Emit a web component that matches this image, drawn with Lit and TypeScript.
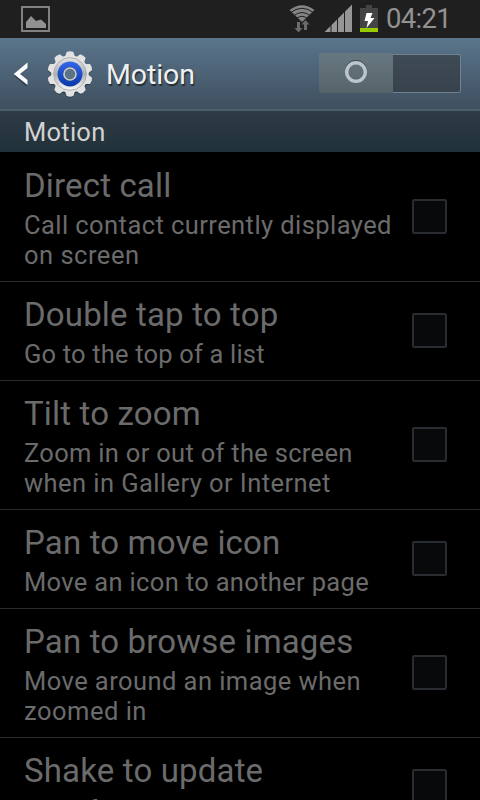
import { LitElement, html, css, svg } from "lit";
import { customElement } from "lit/decorators.js";

@customElement("status-bar")
class StatusBar extends LitElement {
  static styles = css`
    :host { display: flex; height: 38px; background: #1f1f1f; padding: 0 29px 0 21px; align-items: flex-start; }
    svg { display: block; flex: none; }
    .picture { margin-top: 5px; }
    .spacer { flex: 1; }
    .wifi { margin-top: 4px; }
    .signal { margin: 4px 0 0 8px; }
    .battery { margin: 5px 0 0 7px; }
    .clock { width: 65px; margin-left: 8px; font: 27.5px/38px Roboto, sans-serif; color: #929292; white-space: nowrap; letter-spacing: -0.7px; }
  `;
  render() {
    return html`
      <svg class="picture" width="29" height="28" viewBox="0 0 29 28">
        <rect x="1" y="2" width="27" height="24" fill="none" stroke="#8c8c8c" stroke-width="1.8"/>
        <path d="M5 23V17L10 11L15 16L20 14.5L25 19V23Z" fill="#919191"/>
      </svg>
      <div class="spacer"></div>
      <svg class="wifi" width="27" height="29" viewBox="0 0 27 29">
        <path d="M0.500 6Q13 -3.500 25.500 6L13 18Z" fill="#858585"/>
        <g fill="none" stroke="#1f1f1f" stroke-width="1">
          <path d="M1 9Q13 -0.500 25 9"/>
          <path d="M4 12.200Q13 4.800 22 12.200"/>
          <path d="M7 15Q13 9.600 19 15"/>
        </g>
        <path d="M8 18h3v6h2.500L9.500 28.500L5.500 24H8Z" fill="#6b6b6b"/>
        <path d="M15 26h3v-5.500h2.500L16.500 16L12.500 20.500H15Z" fill="#6b6b6b"/>
      </svg>
      <svg class="signal" width="29" height="28" viewBox="0 0 29 28">
        <path d="M0.500 28L6.500 22V28ZM7.500 28V21L13 15.500V28ZM14 28V14.500L20 8.500V28ZM21 28V7.500L28 0.500V28Z" fill="#969696"/>
      </svg>
      <svg class="battery" width="18" height="27" viewBox="0 0 18 27">
        <path d="M6 0h6v3h6v20H0V3h6Z" fill="#444"/>
        <rect y="23" width="18" height="4" fill="#99cc00"/>
        <path d="M6.500 8h6l-2 5h4L6.500 23l1.500-7H4.500Z" fill="#fff"/>
      </svg>
      <div class="clock">04:21</div>`;
  }
}

@customElement("motion-switch")
class MotionSwitch extends LitElement {
  static styles = css`
    :host { display: flex; width: 142px; height: 40px; margin-bottom: 2px; }
    .thumb { width: 74px; height: 40px; border-radius: 3px 2px 2px 3px; background: linear-gradient(#687881, #566369); display: flex; align-items: center; justify-content: center; }
    .track { flex: 1; box-sizing: border-box; margin-top: 1px; height: 39px; border: 1px solid #718391; border-left: 0; border-radius: 0 3px 3px 0; background: linear-gradient(#3f4b54, #37424c); }
    svg { display: block; margin: -2px 0 0 0; }
  `;
  render() {
    return html`<div class="thumb">
        <svg width="24" height="26" viewBox="0 0 24 26">
          <circle cx="12" cy="12" r="9.500" fill="none" stroke="#3e4a53" stroke-width="3"/>
          <circle cx="12" cy="13" r="9.300" fill="none" stroke="#bdc5cf" stroke-width="3.400"/>
        </svg>
      </div><div class="track"></div>`;
  }
}

interface SummaryLine {
  text: string;
  tracking: number;
}

@customElement("setting-row")
class SettingRow extends LitElement {
  static properties = { name: {}, lines: { attribute: false } };
  declare name: string;
  declare lines: SummaryLine[];
  static styles = css`
    :host { display: flex; align-items: center; border-bottom: 1px solid #2b2b2b; padding: 0 33px 0 24px; font-family: Roboto, sans-serif; color: #6b6b6b; }
    .text { flex: 1; padding: 11px 0; white-space: nowrap; }
    .title { font-size: 33px; line-height: 43px; letter-spacing: 0.16px; margin-bottom: 3px; }
    .summary { font-size: 25.500px; line-height: 30px; }
    .box { box-sizing: border-box; width: 35px; height: 35px; margin-bottom: 2px; border: 2px solid #292c30; border-radius: 2px; background: #07090b; }
  `;
  render() {
    return html`<div class="text">
        <div class="title">${this.name}</div>
        ${this.lines.map((l) => html`<div class="summary" style="letter-spacing:${l.tracking}px">${l.text}</div>`)}
      </div><div class="box"></div>`;
  }
}

const line = (text: string, tracking: number): SummaryLine => ({ text, tracking });

const SETTINGS: [string, SummaryLine[]][] = [
  ["Direct call", [line("Call contact currently displayed", 0.43), line("on screen", 0.5)]],
  ["Double tap to top", [line("Go to the top of a list", 0.18)]],
  ["Tilt to zoom", [line("Zoom in or out of the screen", 0.3), line("when in Gallery or Internet", 0.43)]],
  ["Pan to move icon", [line("Move an icon to another page", 0.33)]],
  ["Pan to browse images", [line("Move around an image when", 0.44), line("zoomed in", 0.5)]],
  ["Shake to update", [line("Scan for devices", 0.3)]],
];

@customElement("app-root")
class AppRoot extends LitElement {
  static styles = css`
    :host { display: flex; flex-direction: column; width: 480px; height: 800px; overflow: hidden; background: #000; font-family: Roboto, sans-serif; }
    status-bar, .bar, .section { flex: none; }
    .bar { box-sizing: border-box; height: 73px; display: flex; align-items: center; padding: 0 19px 0 13px; background: linear-gradient(#5a758c, #3f5060 97%); border-bottom: 2px solid #4c5f6c; }
    svg { display: block; flex: none; }
    .gear { margin-left: 15px; }
    .heading { flex: 1; margin: 3px 0 0 12px; font-size: 28.500px; line-height: 34px; letter-spacing: -0.1px; color: #f0f0f0; text-shadow: 1px 2px 1px #222c36; }
    .section { height: 41px; padding-left: 24px; font-size: 25.500px; line-height: 43px; color: #d2d2d2; background: linear-gradient(#2d3b46, #213139); letter-spacing: 0.25px; }
    .list { flex: 1; min-height: 0; overflow: hidden; padding-top: 1px; }
  `;
  render() {
    const teeth = Array.from({ length: 10 }, (_, i) =>
      svg`<path d="M19.500 8L21.500 2Q25 0.500 28.500 2L30.500 8Z" transform=${`rotate(${i * 36} 25 25)`}/>`);
    return html`
      <status-bar></status-bar>
      <div class="bar">
        <svg width="18" height="28" viewBox="0 0 18 28">
          <path d="M14 4.500L3.500 14L14 23.500" transform="translate(0 2)" fill="none" stroke="#33424f" stroke-width="3"/>
          <path d="M14.500 2.500V8L7 14L14.500 20V25L0.800 14Z" fill="#fff"/>
        </svg>
        <svg class="gear" width="48" height="48" viewBox="0 0 50 50">
          <defs>
            <linearGradient id="metal" x2="0" y2="1"><stop stop-color="#e4e4e4"/><stop offset=".5" stop-color="#b0b0b0"/><stop offset="1" stop-color="#fafafa"/></linearGradient>
            <linearGradient id="ring" x2="0" y2="1"><stop stop-color="#3467ea"/><stop offset="1" stop-color="#0938aa"/></linearGradient>
          </defs>
          <g fill="#2d3b48" transform="translate(0 1)">${teeth}<circle cx="25" cy="25" r="20"/></g>
          <g fill="#e2e2e2">${teeth}<circle cx="25" cy="25" r="19.500"/></g>
          <circle cx="25" cy="25" r="17" fill="url(#metal)" stroke="#aaa" stroke-width="1"/>
          <circle cx="25" cy="25" r="13" fill="url(#ring)"/>
          <circle cx="25" cy="25" r="7.200" fill="#2b3f6e"/>
          <circle cx="25" cy="25" r="6.300" fill="#5b7387" stroke="#d0d0d0" stroke-width="1.600"/>
        </svg>
        <div class="heading">Motion</div>
        <motion-switch></motion-switch>
      </div>
      <div class="section">Motion</div>
      <div class="list">
        ${SETTINGS.map(([n, l]) => html`<setting-row .name=${n} .lines=${l}></setting-row>`)}
      </div>`;
  }
}
